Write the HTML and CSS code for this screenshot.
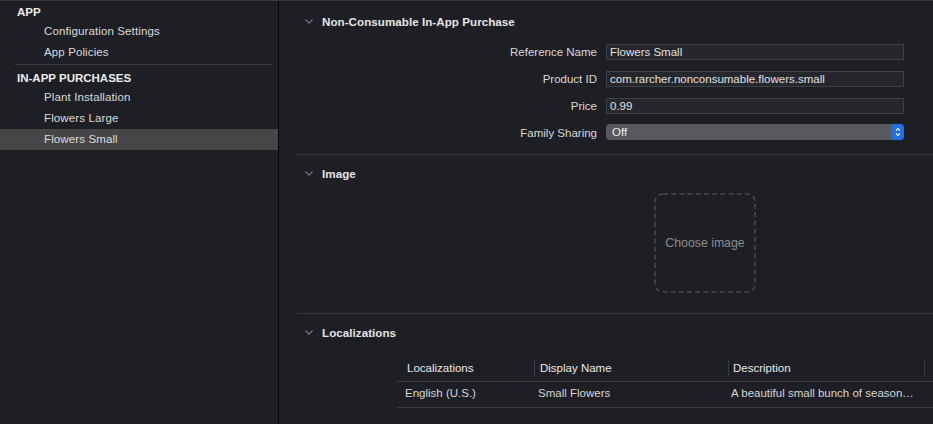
FILE: index.html
```html
<!DOCTYPE html>
<html lang="en">
<head>
<meta charset="utf-8">
<title>StoreKit Configuration</title>
<link rel="stylesheet" href="styles.css">
</head>
<body>
<div class="app">
  <aside class="sidebar">
    <div class="group-title">APP</div>
    <div class="item">Configuration Settings</div>
    <div class="item">App Policies</div>
    <div class="sep"></div>
    <div class="group-title">IN-APP PURCHASES</div>
    <div class="item">Plant Installation</div>
    <div class="item">Flowers Large</div>
    <div class="item selected">Flowers Small</div>
  </aside>
  <main class="content">
    <section class="section first">
      <div class="section-header">
        <svg class="chev" width="8" height="5" viewBox="0 0 8 5"><polyline points="0.5,0.5 4,4.2 7.5,0.5" fill="none" stroke="#7c7d82" stroke-width="1.1"/></svg>
        <span>Non-Consumable In-App Purchase</span>
      </div>
      <div class="form">
        <label class="lbl">Reference Name</label>
        <div class="field">Flowers Small</div>
        <label class="lbl">Product ID</label>
        <div class="field">com.rarcher.nonconsumable.flowers.small</div>
        <label class="lbl">Price</label>
        <div class="field">0.99</div>
        <label class="lbl">Family Sharing</label>
        <div class="popup">
          <span>Off</span>
          <span class="stepper">
            <svg width="6" height="10" viewBox="0 0 6 10"><polyline points="1,3.6 3,1.6 5,3.6" fill="none" stroke="#fff" stroke-width="1.2"/><polyline points="1,6.4 3,8.4 5,6.4" fill="none" stroke="#fff" stroke-width="1.2"/></svg>
          </span>
        </div>
      </div>
    </section>
    <section class="section">
      <div class="section-header">
        <svg class="chev" width="8" height="5" viewBox="0 0 8 5"><polyline points="0.5,0.5 4,4.2 7.5,0.5" fill="none" stroke="#7c7d82" stroke-width="1.1"/></svg>
        <span>Image</span>
      </div>
      <div class="image-area">
        <div class="dropbox">
          <svg class="dash" width="102" height="100" viewBox="0 0 102 100"><rect x="1" y="1" width="100" height="98" rx="8" ry="8" fill="none" stroke="#45464b" stroke-width="1.6" stroke-dasharray="5 3.2"/></svg>
          <span>Choose image</span>
        </div>
      </div>
    </section>
    <section class="section last">
      <div class="section-header">
        <svg class="chev" width="8" height="5" viewBox="0 0 8 5"><polyline points="0.5,0.5 4,4.2 7.5,0.5" fill="none" stroke="#7c7d82" stroke-width="1.1"/></svg>
        <span>Localizations</span>
      </div>
      <div class="table">
        <div class="thead">
          <div class="th c1">Localizations</div>
          <div class="th c2">Display Name</div>
          <div class="th c3">Description</div>
          <div class="th c4"></div>
        </div>
        <div class="trow">
          <div class="td c1">English (U.S.)</div>
          <div class="td c2">Small Flowers</div>
          <div class="td c3">A beautiful small bunch of season…</div>
          <div class="td c4"></div>
        </div>
      </div>
    </section>
  </main>
</div>
</body>
</html>
```

FILE: styles.css
```css
html, body {
  margin: 0;
  padding: 0;
  background: #1e1f24;
  height: 424px;
  overflow: hidden;
}

body {
  font-family: "Liberation Sans", Arial, sans-serif;
  font-size: 11.5px;
  color: #dcdcdd;
}

.app {
  display: flex;
  height: 423px;
  border-top: 1px solid #38393d;
}

/* Sidebar */
.sidebar {
  flex: none;
  width: 278px;
  border-right: 1px solid #050506;
}

.group-title {
  height: 18px;
  line-height: 18px;
  padding: 2px 0 0 17px;
  font-weight: bold;
  color: #ececec;
  font-size: 11.5px;
}

.item {
  height: 21px;
  line-height: 21px;
  padding-left: 44px;
  color: #dadadb;
  letter-spacing: 0.12px;
}

.item.selected {
  background: #464649;
}

.sep {
  height: 1px;
  background: #393a3e;
  margin: 1px 6px 2px 15px;
}

/* Content */
.content {
  flex: 1;
  min-width: 0;
  padding-top: 1px;
}

.section {
  border-bottom: 1px solid #38393d;
  margin-left: 18px;
}

.section.last {
  border-bottom: none;
}

.section-header {
  box-sizing: border-box;
  height: 38px;
  display: flex;
  align-items: center;
  padding: 0 0 2px 8px;
  font-weight: bold;
  color: #e4e4e5;
  font-size: 11.6px;
  letter-spacing: 0.05px;
}

.chev {
  flex: none;
  margin-right: 9px;
  margin-top: 1px;
}

.first .section-header {
  margin-top: 1px;
}

.form {
  display: grid;
  grid-template-columns: 300px 298px;
  grid-auto-rows: 16px;
  column-gap: 9px;
  row-gap: 11px;
  padding: 3px 0 13px;
}

.lbl {
  text-align: right;
  line-height: 16px;
  color: #d8d8d9;
}

.field {
  box-sizing: border-box;
  height: 16px;
  line-height: 14px;
  padding-left: 3px;
  background: #26272c;
  border: 1px solid #3f4045;
  color: #e0e0e1;
  white-space: nowrap;
  overflow: hidden;
}

.popup {
  box-sizing: border-box;
  height: 16px;
  display: flex;
  align-items: center;
  justify-content: space-between;
  padding-left: 6px;
  background: #58595d;
  border-radius: 4px;
  color: #ececec;
  line-height: 16px;
  margin-top: -1px;
}

.stepper {
  width: 13px;
  height: 16px;
  background: #1c6fe6;
  border-radius: 4px;
  display: flex;
  align-items: center;
  justify-content: center;
}

.image-area {
  padding: 0 0 20px 357px;
}

.dropbox {
  position: relative;
  width: 102px;
  height: 100px;
  display: flex;
  align-items: center;
  justify-content: center;
  color: #8c8c90;
  font-size: 12.3px;
}

.dash {
  position: absolute;
  left: 0;
  top: 0;
}

.table {
  margin-left: 100px;
  padding-top: 3px;
}

.thead, .trow {
  display: grid;
  grid-template-columns: 138px 194px 196px 1fr;
  border-bottom: 1px solid #3a3b3f;
}

.th {
  height: 26px;
  line-height: 26px;
  position: relative;
  color: #e8e8e9;
}

.th.c1 { padding-left: 10px; }
.th.c2 { padding-left: 5px; }
.th.c3 { padding-left: 4px; }

.th.c1::after, .th.c2::after, .th.c3::after {
  content: "";
  position: absolute;
  right: 0;
  top: 5px;
  width: 1px;
  height: 16px;
  background: #3c3d41;
}

.td {
  height: 22px;
  line-height: 22px;
  padding-bottom: 3px;
  color: #d6d6d7;
  white-space: nowrap;
  overflow: hidden;
}

.td.c1 { padding-left: 8px; }
.td.c2 { padding-left: 3px; }
.td.c3 { padding-left: 2px; }
```
